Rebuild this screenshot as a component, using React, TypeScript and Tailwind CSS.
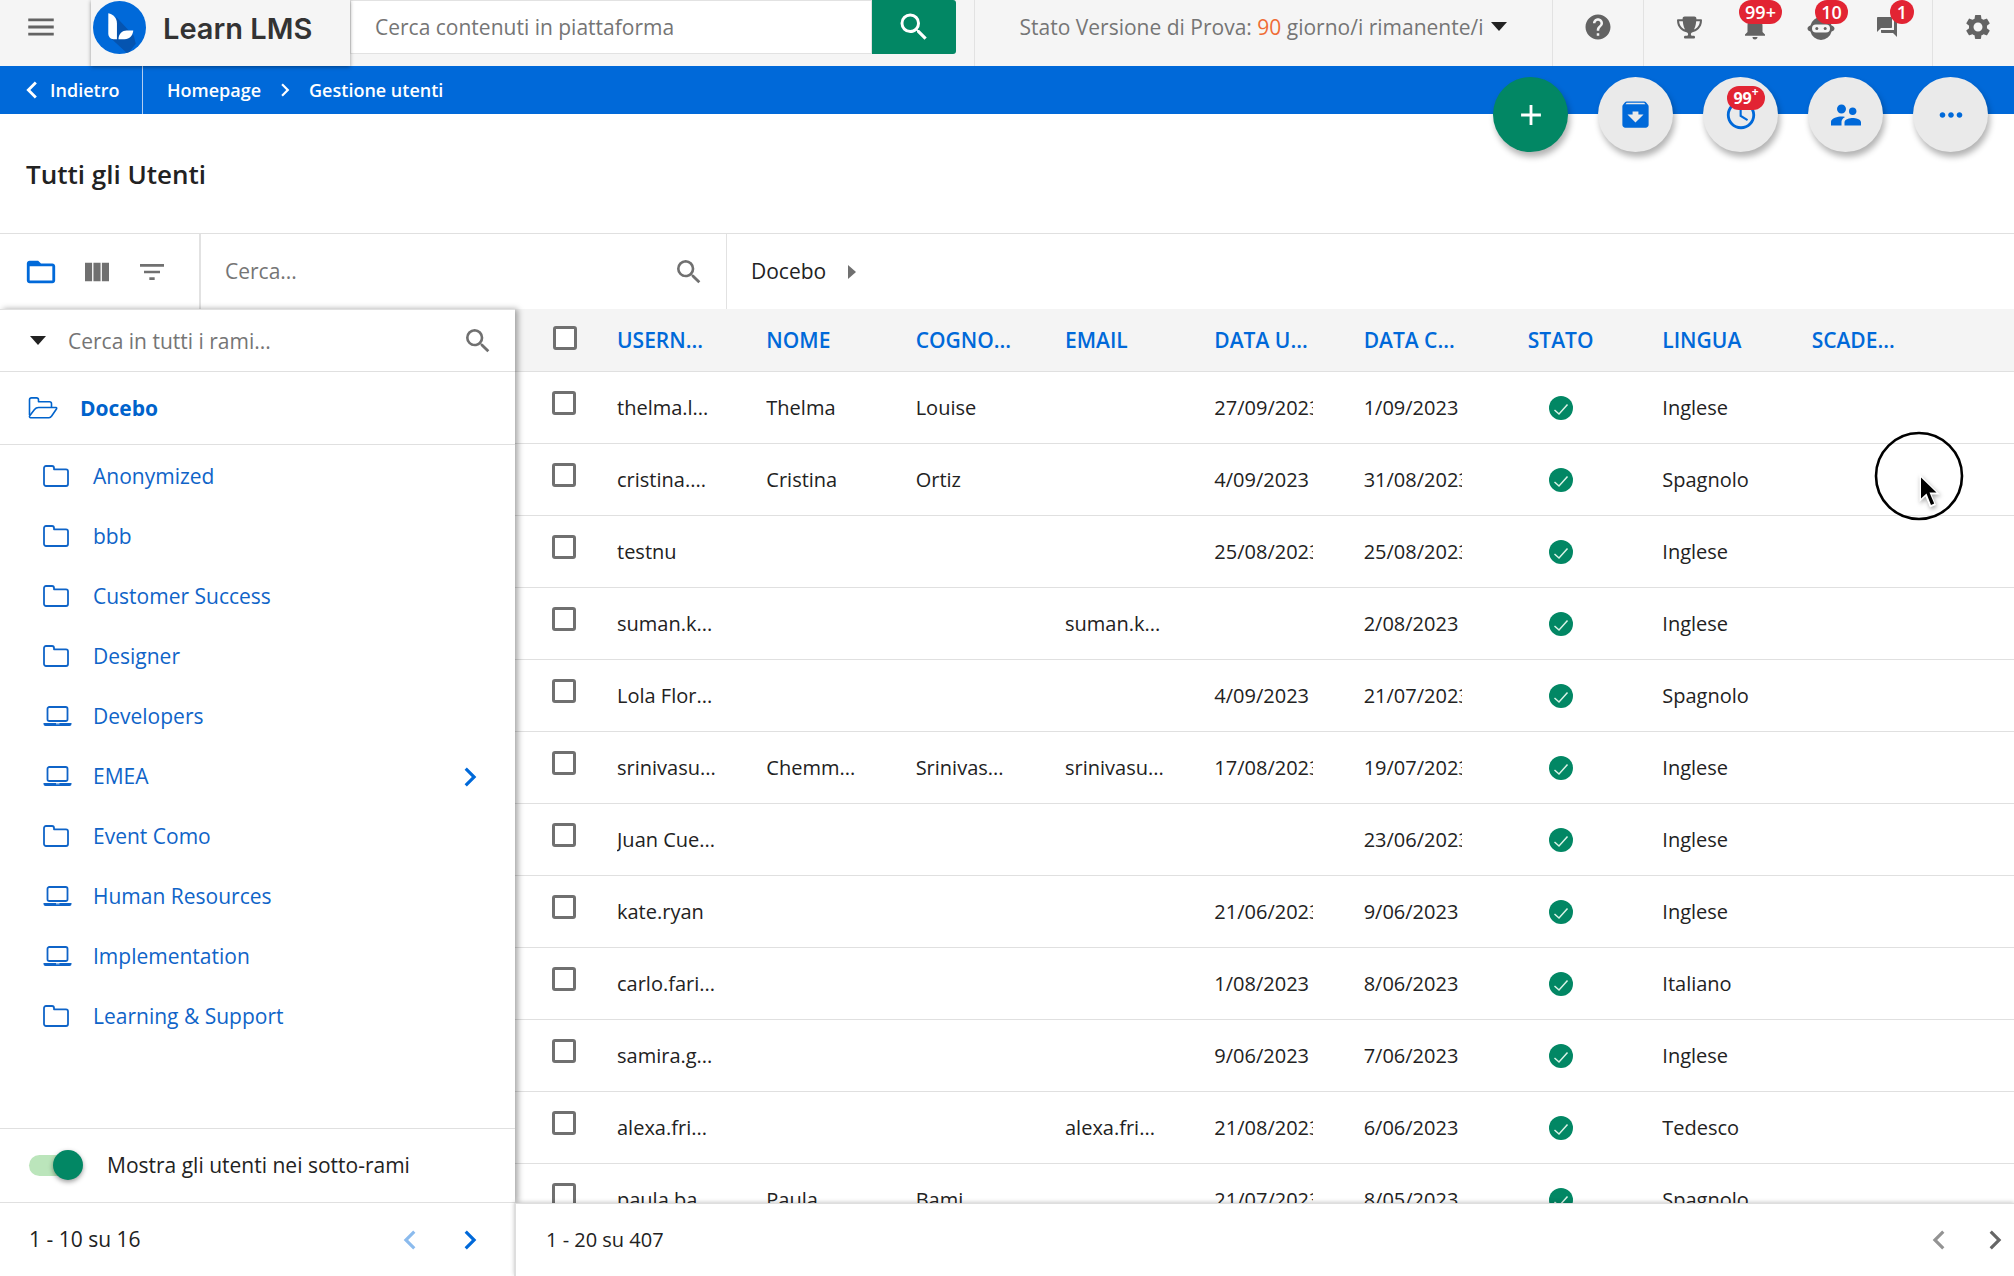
import type { ReactNode } from "react";
import {
  MdAccessTime,
  MdAdd,
  MdArchive,
  MdChevronLeft,
  MdChevronRight,
  MdFilterList,
  MdFolderOpen,
  MdHelp,
  MdMenu,
  MdMoreHoriz,
  MdNotifications,
  MdQuestionAnswer,
  MdSearch,
  MdSettings,
  MdSupervisorAccount,
  MdViewColumn,
} from "react-icons/md";
import { FaTrophy } from "react-icons/fa6";

type TreeNode = { name: string; kind: "folder" | "laptop"; children?: boolean };

const tree: TreeNode[] = [
  { name: "Anonymized", kind: "folder" },
  { name: "bbb", kind: "folder" },
  { name: "Customer Success", kind: "folder" },
  { name: "Designer", kind: "folder" },
  { name: "Developers", kind: "laptop" },
  { name: "EMEA", kind: "laptop", children: true },
  { name: "Event Como", kind: "folder" },
  { name: "Human Resources", kind: "laptop" },
  { name: "Implementation", kind: "laptop" },
  { name: "Learning & Support", kind: "folder" },
];

type User = {
  user: string;
  name?: string;
  surname?: string;
  email?: string;
  last?: string;
  created: string;
  language: string;
};

const users: User[] = [
  { user: "thelma.l...", name: "Thelma", surname: "Louise", last: "27/09/2023", created: "1/09/2023", language: "Inglese" },
  { user: "cristina....", name: "Cristina", surname: "Ortiz", last: "4/09/2023", created: "31/08/2023", language: "Spagnolo" },
  { user: "testnu", last: "25/08/2023", created: "25/08/2023", language: "Inglese" },
  { user: "suman.k...", email: "suman.k...", created: "2/08/2023", language: "Inglese" },
  { user: "Lola Flor...", last: "4/09/2023", created: "21/07/2023", language: "Spagnolo" },
  { user: "srinivasu...", name: "Chemm...", surname: "Srinivas...", email: "srinivasu...", last: "17/08/2023", created: "19/07/2023", language: "Inglese" },
  { user: "Juan Cue...", created: "23/06/2023", language: "Inglese" },
  { user: "kate.ryan", last: "21/06/2023", created: "9/06/2023", language: "Inglese" },
  { user: "carlo.fari...", last: "1/08/2023", created: "8/06/2023", language: "Italiano" },
  { user: "samira.g...", last: "9/06/2023", created: "7/06/2023", language: "Inglese" },
  { user: "alexa.fri...", email: "alexa.fri...", last: "21/08/2023", created: "6/06/2023", language: "Tedesco" },
  { user: "paula.ba...", name: "Paula", surname: "Bami", last: "21/07/2023", created: "8/05/2023", language: "Spagnolo" },
];

const columns = ["USERN...", "NOME", "COGNO...", "EMAIL", "DATA U...", "DATA C...", "STATO", "LINGUA", "SCADE..."];

function LogoMark() {
  return (
    <svg viewBox="0 0 52 52" className="size-[53px]" aria-hidden="true">
      <defs>
        <clipPath id="disc">
          <circle cx="26" cy="26" r="26" />
        </clipPath>
      </defs>
      <circle cx="26" cy="26" r="26" fill="#0069d9" />
      <g clipPath="url(#disc)">
        <path d="M23 16 L40 34 L42 42 L34 52 L30 48 L18 37 Z" fill="#0554b0" />
      </g>
      <path d="M15 12 C20 13 23.500 17 23.500 22 V37.500 H20 C17 37.500 15 35 15 32 Z" fill="#fff" />
      <path d="M25 37.500 C25 32 29 29 33 29 H39.500 C39 34 36 37.500 31 37.500 Z" fill="#fff" />
    </svg>
  );
}

function RobotIcon() {
  return (
    <svg viewBox="0 0 28 28" className="size-7" fill="currentColor" aria-hidden="true">
      <path
        fillRule="evenodd"
        d="M14 4a11 11 0 0 1 10.600 8.500c1.700.5 2.900 1.500 2.900 3s-1.200 2.600-2.900 3.100A11 11 0 0 1 14 27 11 11 0 0 1 3.400 18.600C1.700 18.100.5 17 .5 15.500s1.200-2.500 2.900-3A11 11 0 0 1 14 4Zm-5 7.500a4 4 0 0 0 0 8h10a4 4 0 0 0 0-8H9Z"
      />
      <circle cx="9.800" cy="15.500" r="1.500" />
      <circle cx="18.200" cy="15.500" r="1.500" />
    </svg>
  );
}

function FolderIcon() {
  return (
    <svg viewBox="0 0 26 24" className="h-6 w-[26px]" fill="none" stroke="currentColor" strokeWidth="1.800" strokeLinejoin="round" aria-hidden="true">
      <path d="M1 3 A2 2 0 0 1 3 1 H9 A2 2 0 0 1 11 3 V4.300 H23 A2 2 0 0 1 25 6.300 V19 A2 2 0 0 1 23 21 H3 A2 2 0 0 1 1 19 Z" />
    </svg>
  );
}

function OpenFolderIcon() {
  return (
    <svg viewBox="0 0 30 24" className="h-6 w-[30px]" fill="none" stroke="currentColor" strokeWidth="1.600" strokeLinejoin="round" aria-hidden="true">
      <path d="M1.500 18 V2.800 A2 2 0 0 1 3.500 .9 H8.500 A2 2 0 0 1 10.500 2.800 V4.800 H21.500 A2 2 0 0 1 23.500 6.800 V10.500" />
      <path d="M10.500 10.500 H28 A.8.8 0 0 1 28.600 11.700 L23.500 19.200 A3 3 0 0 1 21 20.700 H2.800 A1.200 1.200 0 0 1 1.700 18.800 L6.500 12.500 A5 5 0 0 1 10.500 10.500 Z" />
    </svg>
  );
}

function LaptopIcon() {
  return (
    <svg viewBox="0 0 29 22" className="h-[22px] w-[29px]" aria-hidden="true">
      <rect x="4.500" y="1" width="20" height="14" rx="1.800" fill="none" stroke="currentColor" strokeWidth="1.800" />
      <path d="M.5 17 H28.500 V18 A2 2 0 0 1 26.500 20 H2.500 A2 2 0 0 1 .5 18 Z" fill="currentColor" />
      <path d="M13 17.800 H16.500" stroke="#fff" strokeWidth=".8" />
    </svg>
  );
}

function StatusIcon() {
  return (
    <svg viewBox="0 0 24 24" className="size-6" role="img" aria-label="Attivo">
      <circle cx="12" cy="12" r="12" fill="#028764" />
      <path d="M5.500 14 L10 18 L18.500 8.500" fill="none" stroke="#d9f2e6" strokeWidth="1.500" />
    </svg>
  );
}

function DownTriangle() {
  return (
    <svg viewBox="0 0 16 9" className="h-[9px] w-4 shrink-0" aria-hidden="true">
      <path d="M0 0 H16 L8 9 Z" fill="#222" />
    </svg>
  );
}

function Checkbox({ label }: { label: string }) {
  return (
    <input
      type="checkbox"
      aria-label={label}
      className="block size-6 appearance-none rounded-[3px] border-3 border-[#707070] bg-white checked:bg-[#0069d9]"
    />
  );
}

function HeaderIcon({ label, badge, children }: { label: string; badge?: ReactNode; children: ReactNode }) {
  return (
    <button type="button" aria-label={label} className="relative flex h-[54px] w-[66px] items-center justify-center">
      {children}
      {badge}
    </button>
  );
}

function Fab({ label, green, children }: { label: string; green?: boolean; children: ReactNode }) {
  return (
    <button
      type="button"
      aria-label={label}
      className={
        green
          ? "relative flex size-[75px] items-center justify-center rounded-full bg-[#028764] text-white shadow-[2px_5px_6px_rgba(0,0,0,0.3)]"
          : "relative flex size-[75px] items-center justify-center rounded-full bg-[#eaeaea] text-[#0069d9] shadow-[2px_5px_6px_rgba(0,0,0,0.3)]"
      }
    >
      {children}
    </button>
  );
}

function TopBar() {
  return (
    <header className="flex h-[66px] shrink-0 items-stretch bg-[#f5f5f5] text-[#636363]">
      <button type="button" aria-label="Menu" className="flex h-[54px] w-[91px] items-center pl-6">
        <MdMenu className="size-[34px]" />
      </button>
      <a href="#" className="relative z-10 flex w-[259px] items-start gap-[17px] bg-[#f5f5f5] pt-px pl-0.5 text-[#333] shadow-[0_1px_4px_rgba(0,0,0,0.4)]">
        <LogoMark />
        <span className="pt-2.5 font-[Inter] text-[29px] leading-9 font-semibold whitespace-nowrap">Learn LMS</span>
      </a>
      <form className="mr-[18px] flex h-[54px] min-w-0 flex-1">
        <input
          type="text"
          aria-label="Cerca contenuti in piattaforma"
          placeholder="Cerca contenuti in piattaforma"
          className="min-w-0 flex-1 border border-[#e2e2e2] bg-white px-6 pt-0.5 text-[21px] outline-none placeholder:text-[#757575]"
        />
        <button type="button" aria-label="Cerca" className="flex w-[84px] items-center justify-center rounded-r-[3px] bg-[#028764] text-white">
          <MdSearch className="size-9" />
        </button>
      </form>
      <button
        type="button"
        className="flex w-[578px] items-start justify-center gap-2 border-l border-[#e2e2e2] pt-[11px] text-[21px] leading-8 whitespace-nowrap text-[#757575]"
      >
        <span>
          Stato Versione di Prova: <span className="text-[#ef6c35]">90</span> giorno/i rimanente/i
        </span>
        <span className="flex h-[30px] items-center">
          <DownTriangle />
        </span>
      </button>
      <div className="flex w-[91px] justify-center border-l border-[#e2e2e2]">
        <HeaderIcon label="Aiuto">
          <MdHelp className="size-[30px]" />
        </HeaderIcon>
      </div>
      <nav className="flex w-[289px] border-l border-[#e2e2e2] pl-3">
        <HeaderIcon label="Premi">
          <FaTrophy className="size-[25px]" />
        </HeaderIcon>
        <HeaderIcon
          label="Notifiche"
          badge={<span className="absolute top-0 left-[17px] flex h-6 w-[43px] items-center justify-center rounded-full bg-[#e22433] text-lg leading-6 font-semibold text-white">99+</span>}
        >
          <MdNotifications className="size-[30px]" />
        </HeaderIcon>
        <HeaderIcon
          label="Assistente"
          badge={<span className="absolute top-0 left-[27px] flex h-6 w-[33px] items-center justify-center rounded-full bg-[#e22433] text-lg leading-6 font-semibold text-white">10</span>}
        >
          <RobotIcon />
        </HeaderIcon>
        <HeaderIcon
          label="Messaggi"
          badge={<span className="absolute top-0 left-9 flex size-6 items-center justify-center rounded-full bg-[#e22433] text-lg leading-6 font-semibold text-white">1</span>}
        >
          <MdQuestionAnswer className="size-6" />
        </HeaderIcon>
      </nav>
      <div className="flex w-[82px] border-l border-[#e2e2e2] pl-3">
        <HeaderIcon label="Impostazioni">
          <MdSettings className="size-[30px]" />
        </HeaderIcon>
      </div>
    </header>
  );
}

function Breadcrumbs() {
  return (
    <nav className="flex h-12 shrink-0 items-stretch bg-[#0069d9] text-lg font-semibold text-white">
      <a href="#" className="flex w-[143px] items-center gap-px border-r border-[#b3cdf0] pl-[15px]">
        <MdChevronLeft className="size-[34px]" />
        Indietro
      </a>
      <div className="flex items-center gap-[11px] pl-6">
        <a href="#">Homepage</a>
        <MdChevronRight className="size-[26px]" />
        <a href="#">Gestione utenti</a>
      </div>
    </nav>
  );
}

function Title() {
  return (
    <div className="relative flex h-[119px] shrink-0 items-center px-[26px]">
      <h1 className="text-[26px] leading-8 font-semibold text-[#222]">Tutti gli Utenti</h1>
      <div className="absolute -top-[37px] right-[26px] z-10 flex gap-[30px]">
        <Fab label="Nuovo utente" green>
          <MdAdd className="size-[34px]" />
        </Fab>
        <Fab label="Archivio">
          <MdArchive className="size-[35px]" />
        </Fab>
        <Fab label="In attesa">
          <MdAccessTime className="size-[34px]" />
          <span className="absolute top-[9px] left-6 flex h-6 w-[38px] justify-center rounded-full bg-[#e22433] text-base leading-6 font-bold text-white">
            99<span className="text-xs leading-3">+</span>
          </span>
        </Fab>
        <Fab label="Gruppi">
          <MdSupervisorAccount className="size-9" />
        </Fab>
        <Fab label="Altro">
          <MdMoreHoriz className="size-[34px]" />
        </Fab>
      </div>
    </div>
  );
}

function Toolbar() {
  return (
    <div className="flex h-[76px] shrink-0 items-stretch border-t border-[#e0e0e0] text-[#707070]">
      <div className="flex w-[201px] items-center gap-[23px] border-r-2 border-[#e2e2e2] pl-6">
        <button type="button" aria-label="Rami" className="text-[#0069d9]">
          <MdFolderOpen className="size-[34px]" />
        </button>
        <button type="button" aria-label="Colonne">
          <MdViewColumn className="size-8" />
        </button>
        <button type="button" aria-label="Filtri">
          <MdFilterList className="size-8" />
        </button>
      </div>
      <label className="flex w-[526px] items-center border-r border-[#e2e2e2] pr-[21px] pl-6">
        <input type="text" aria-label="Cerca utenti" placeholder="Cerca..." className="min-w-0 flex-1 text-[21px] outline-none placeholder:text-[#757575]" />
        <MdSearch className="size-8" />
      </label>
      <a href="#" className="flex items-center gap-[22px] pl-6 text-[21px] text-[#222]">
        Docebo
        <svg viewBox="0 0 8 14" className="h-3.5 w-2" aria-hidden="true">
          <path d="M0 0 L8 7 L0 14 Z" fill="#707070" />
        </svg>
      </a>
    </div>
  );
}

function Sidebar() {
  return (
    <aside className="relative z-10 flex w-[515px] shrink-0 flex-col bg-white text-[21px] text-[#0f64c8] shadow-[3px_0_6px_rgba(0,0,0,0.35)]">
      <div className="flex h-[63px] shrink-0 items-center border-y border-[#e0e0e0] pr-[21px] pl-[30px] text-[#707070]">
        <button type="button" aria-label="Opzioni di ricerca">
          <DownTriangle />
        </button>
        <input type="text" aria-label="Cerca in tutti i rami" placeholder="Cerca in tutti i rami..." className="ml-[22px] min-w-0 flex-1 pt-0.5 outline-none placeholder:text-[#757575]" />
        <MdSearch className="size-8" />
      </div>
      <a href="#" className="flex h-[73px] shrink-0 items-center gap-[22px] border-b border-[#e0e0e0] pt-px pl-7 font-bold text-[#0063cc]">
        <OpenFolderIcon />
        Docebo
      </a>
      <ul className="min-h-0 flex-1 overflow-hidden pt-0.5">
        {tree.map((node) => (
          <li key={node.name} className="flex h-[60px] items-center pr-[26px] pl-[43px]">
            <a href="#" className="flex flex-1 items-center">
              <span className="w-[50px]">{node.kind === "folder" ? <FolderIcon /> : <LaptopIcon />}</span>
              {node.name}
            </a>
            {node.children && (
              <button type="button" aria-label={`Apri ${node.name}`}>
                <MdChevronRight className="size-[38px] text-[#0069d9]" />
              </button>
            )}
          </li>
        ))}
      </ul>
      <label className="flex h-[75px] shrink-0 items-center gap-7 border-y border-[#e0e0e0] pl-[29px] text-[#222]">
        <input
          type="checkbox"
          role="switch"
          defaultChecked
          className="relative h-[21px] w-[50px] appearance-none rounded-full bg-[#bbe5bb] before:absolute before:-top-[5px] before:right-[-4px] before:size-[30px] before:rounded-full before:bg-[#028764] before:shadow-[0_2px_5px_rgba(0,0,0,0.4)]"
        />
        Mostra gli utenti nei sotto-rami
      </label>
    </aside>
  );
}

function Cell({ children }: { children?: ReactNode }) {
  return (
    <td className="pr-[51px]">
      <div className="overflow-hidden whitespace-nowrap">{children}</div>
    </td>
  );
}

function UsersTable() {
  return (
    <section className="min-w-0 flex-1 overflow-hidden">
      <table className="w-full table-fixed border-separate border-spacing-0 text-left text-[20px] leading-7 text-[#222] [&_td]:border-b [&_td]:border-[#e0e0e0] [&_th]:border-b [&_th]:border-[#e0e0e0]">
        <colgroup>
          <col className="w-[102px]" />
          {columns.map((c) => (
            <col key={c} />
          ))}
          <col className="w-[53px]" />
        </colgroup>
        <thead>
          <tr className="h-[63px] bg-[#f4f4f4] text-[21px] text-[#0069d9]">
            <th className="pt-[17px] pl-[38px] align-top">
              <Checkbox label="Seleziona tutti" />
            </th>
            {columns.map((c) => (
              <th key={c} className="pr-[54px] font-semibold">
                <div className={c === "STATO" ? "flex justify-center whitespace-nowrap" : "whitespace-nowrap"}>{c}</div>
              </th>
            ))}
            <th aria-label="Azioni" />
          </tr>
        </thead>
        <tbody>
          {users.map((u) => (
            <tr key={u.user} className="h-[72px]">
              <td className="pt-[19px] pl-[37px] align-top">
                <Checkbox label={`Seleziona ${u.user}`} />
              </td>
              <Cell>{u.user}</Cell>
              <Cell>{u.name}</Cell>
              <Cell>{u.surname}</Cell>
              <Cell>{u.email}</Cell>
              <Cell>{u.last}</Cell>
              <Cell>{u.created}</Cell>
              <td className="pr-[54px]">
                <span className="flex justify-center">
                  <StatusIcon />
                </span>
              </td>
              <Cell>{u.language}</Cell>
              <td />
              <td />
            </tr>
          ))}
        </tbody>
      </table>
    </section>
  );
}

function Footer() {
  return (
    <footer className="relative z-20 flex h-[73px] shrink-0 bg-white text-[#222]">
      <div className="flex w-[514px] items-center justify-between pr-[25px] pl-[29px] text-[21px]">
        1 - 10 su 16
        <span className="flex gap-[22px] text-[#0069d9]">
          <button type="button" aria-label="Rami precedenti" className="opacity-45">
            <MdChevronLeft className="size-[38px]" />
          </button>
          <button type="button" aria-label="Rami successivi">
            <MdChevronRight className="size-[38px]" />
          </button>
        </span>
      </div>
      <div className="flex flex-1 items-center justify-between border-t border-l-2 border-[#dedede] pl-[30px] text-[20px] shadow-[0_-1px_4px_rgba(0,0,0,0.2)]">
        1 - 20 su 407
        <span className="flex gap-[18px] text-[#666]">
          <button type="button" aria-label="Utenti precedenti" className="opacity-70">
            <MdChevronLeft className="size-[38px]" />
          </button>
          <button type="button" aria-label="Utenti successivi">
            <MdChevronRight className="size-[38px]" />
          </button>
        </span>
      </div>
    </footer>
  );
}

function Pointer() {
  return (
    <svg viewBox="0 0 90 90" className="pointer-events-none absolute top-[431px] right-[50px] z-30 size-[90px]" aria-hidden="true">
      <circle cx="45" cy="45" r="43" fill="none" stroke="#000" strokeWidth="2.600" />
      <g style={{ filter: "drop-shadow(1px 2px 2px rgba(0,0,0,.35))" }}>
        <path d="M45.500 43 V71 L51.500 65.500 L56 76.500 L62 74 L57.500 63.500 H66 Z" fill="#fff" />
      </g>
      <path d="M47 46.500 V67.500 L52.500 62.500 L57 74 L60.200 72.500 L55.500 61.500 H62.500 Z" fill="#000" />
    </svg>
  );
}

export default function App() {
  return (
    <div className="relative flex h-screen flex-col overflow-hidden bg-white font-['Open_Sans',sans-serif]">
      <TopBar />
      <Breadcrumbs />
      <Title />
      <Toolbar />
      <main className="flex min-h-0 flex-1">
        <Sidebar />
        <UsersTable />
      </main>
      <Footer />
      <Pointer />
    </div>
  );
}
